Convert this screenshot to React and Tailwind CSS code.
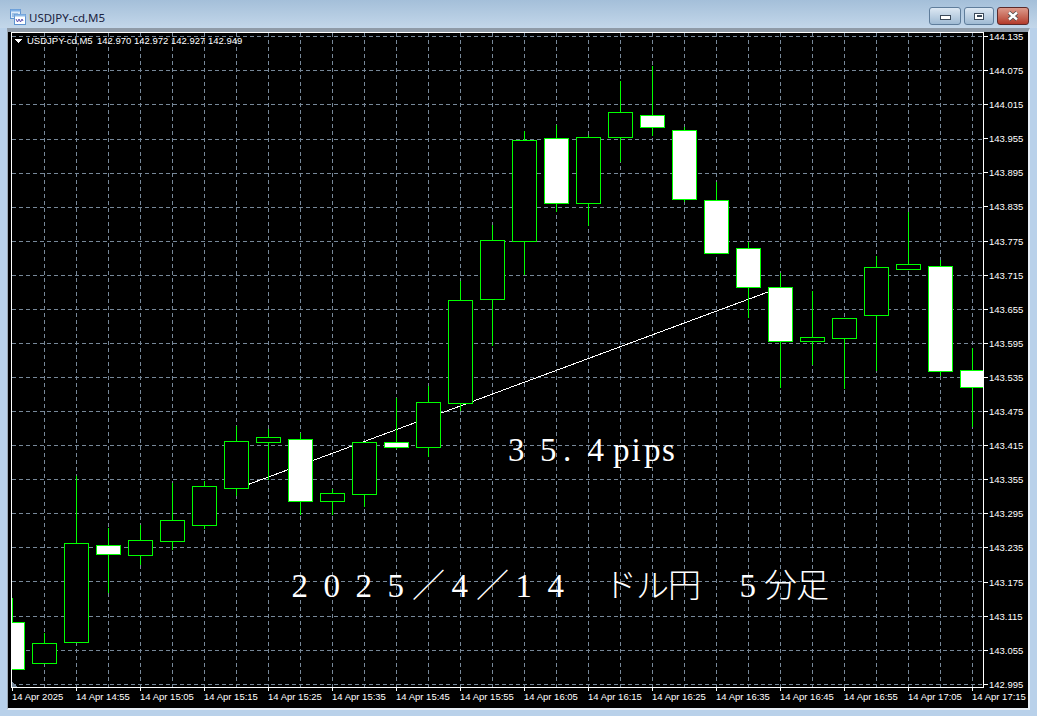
const GRID_Y = [36, 70, 104, 139, 173, 207, 241, 275, 309, 343, 377, 411, 445, 479, 513, 547, 581, 616, 650, 684];
const PRICES = ["144.135", "144.075", "144.015", "143.955", "143.895", "143.835", "143.775", "143.715", "143.655", "143.595", "143.535", "143.475", "143.415", "143.355", "143.295", "143.235", "143.175", "143.115", "143.055", "142.995"];
const TIMES = ["14 Apr 2025", "14 Apr 14:55", "14 Apr 15:05", "14 Apr 15:15", "14 Apr 15:25", "14 Apr 15:35", "14 Apr 15:45", "14 Apr 15:55", "14 Apr 16:05", "14 Apr 16:15", "14 Apr 16:25", "14 Apr 16:35", "14 Apr 16:45", "14 Apr 16:55", "14 Apr 17:05", "14 Apr 17:15"];

// high, low, body top, body bottom, filled
const CANDLES = [
  [598, 622, 622, 669, 1],
  [633, 643, 643, 663, 0],
  [476, 543, 543, 642, 0],
  [528, 593, 545, 554, 1],
  [525, 565, 540, 555, 0],
  [483, 550, 520, 541, 0],
  [481, 529, 486, 525, 0],
  [426, 496, 441, 488, 0],
  [429, 480, 437, 442, 0],
  [433, 515, 439, 501, 1],
  [489, 515, 493, 501, 0],
  [442, 507, 442, 494, 0],
  [398, 449, 442, 447, 1],
  [386, 457, 402, 447, 0],
  [281, 411, 300, 403, 0],
  [225, 346, 240, 299, 0],
  [131, 275, 140, 241, 0],
  [125, 212, 138, 203, 1],
  [135, 226, 137, 203, 0],
  [81, 162, 112, 137, 0],
  [66, 136, 115, 127, 1],
  [127, 202, 130, 199, 1],
  [182, 253, 200, 253, 1],
  [242, 318, 248, 287, 1],
  [273, 388, 287, 341, 1],
  [291, 365, 337, 341, 0],
  [318, 389, 318, 338, 0],
  [256, 371, 267, 315, 0],
  [212, 269, 264, 269, 0],
  [260, 376, 266, 371, 1],
  [348, 427, 370, 387, 1],
];

function AppIcon() {
  return (
    <svg width="17" height="17" viewBox="0 0 17 17" className="shrink-0">
      <rect x="0.5" y="0.5" width="10" height="9" fill="#dcebfa" stroke="#5f93cf" />
      <rect x="0.5" y="0.5" width="10" height="2" fill="#7fb0e6" />
      <path d="M2 5h6M2 7h4" stroke="#5f93cf" />
      <rect x="4.5" y="5.5" width="11" height="10" fill="#ffffff" stroke="#5f93cf" />
      <rect x="4.5" y="5.5" width="11" height="2" fill="#8fbbe9" />
      <path d="M6 10l1.5 3 1.5-3 1.5 3 1.5-3 1 2" fill="none" stroke="#5a4fb0" />
    </svg>
  );
}

function Chart() {
  return (
    <svg width="971" height="654" viewBox="12 33 971 654" shapeRendering="crispEdges" className="block">
      {GRID_Y.map((y) => (
        <line key={y} x1="12" x2="983" y1={y + 0.5} y2={y + 0.5} stroke="#778899" strokeDasharray="4 3" />
      ))}
      {CANDLES.slice(1).map((_, i) => (
        <line key={i} x1={44.5 + i * 32} x2={44.5 + i * 32} y1="33" y2="687" stroke="#778899" strokeDasharray="4 3" />
      ))}
      <line x1="236" y1="489" x2="768" y2="292" stroke="#ffffff" />
      {CANDLES.map(([high, low, top, bottom, filled], i) => {
        const cx = 12.5 + i * 32;
        return (
          <g key={i}>
            <line x1={cx} x2={cx} y1={high} y2={low} stroke="#00ff00" />
            <rect x={cx - 12} y={top + 0.5} width="24" height={bottom - top} fill={filled ? "#ffffff" : "#000000"} stroke="#00ff00" />
          </g>
        );
      })}
      <polygon points="12,682 17,687 12,687" fill="#778899" />
      <polygon points="15,39 22,39 18.5,43" fill="#ffffff" />
      <text x="27" y="44" fill="#ffffff" className="text-[9.5px] whitespace-pre [font-family:'Liberation_Sans',sans-serif]">USDJPY-cd,M5</text>
      <text x="97" y="44" fill="#ffffff" className="text-[9.5px] whitespace-pre [font-family:'Liberation_Sans',sans-serif]">142.970 142.972 142.927 142.949</text>
      {/* full width digits come out sans in the CJK font, so the serif digits are set on the same 32px cells */}
      <g fill="#ffffff" shapeRendering="auto" className="text-[33px] font-light [font-family:'Liberation_Serif','Noto_Sans_CJK_JP',serif]">
        <text y="461" x="508 540 563 587.5 613 631.5 644 662">35.4pips</text>
        <text y="597">
          <tspan x="291.5 323.5 355.5 387.5">2025</tspan>
          <tspan x="412">／</tspan>
          <tspan x="451.5">4</tspan>
          <tspan x="476">／</tspan>
          <tspan x="515.5 547.5">14</tspan>
          <tspan x="604 636 668">ドル円</tspan>
          <tspan x="739.5">5</tspan>
          <tspan x="764 796">分足</tspan>
        </text>
      </g>
    </svg>
  );
}

export default function App() {
  return (
    <div className="flex h-[716px] w-[1037px] flex-col overflow-hidden bg-[#b9d1ea]">
      {/* title bar */}
      <div className="flex h-[28px] shrink-0 items-start bg-gradient-to-b from-[#a4bfd9] to-[#c3d7ea] pl-[10px] pr-[8px]">
        <div className="mt-[9px] flex items-center gap-[2px]">
          <AppIcon />
          <span className="text-[11.5px] leading-[16px] text-[#1b2340] [font-family:'Noto_Sans',sans-serif]">USDJPY-cd,M5</span>
        </div>
        <div className="ml-auto mt-[7px] flex gap-[3px]">
          <button className="flex h-[18px] w-[32px] items-center justify-center rounded-[3px] border border-[#5f7d9b] bg-gradient-to-b from-[#dde8f3] to-[#9fbad3]">
            <span className="mt-[2px] h-[5px] w-[11px] border border-[#3c4a5a] bg-white" />
          </button>
          <button className="flex h-[18px] w-[30px] items-center justify-center rounded-[3px] border border-[#5f7d9b] bg-gradient-to-b from-[#dde8f3] to-[#9fbad3]">
            <span className="flex h-[7px] w-[10px] items-center justify-center border border-[#3c4a5a] bg-white">
              <span className="h-[2px] w-[5px] bg-[#3c4a5a]" />
            </span>
          </button>
          <button className="flex h-[18px] w-[32px] items-center justify-center rounded-[3px] border border-[#5c2a2a] bg-gradient-to-b from-[#dc9a8c] to-[#b33a2b]">
            <svg width="14" height="10" viewBox="0 0 14 10">
              <path d="M3 1.5l8 7M11 1.5l-8 7" stroke="#4a4a4a" strokeWidth="4" />
              <path d="M3 1.5l8 7M11 1.5l-8 7" stroke="#ffffff" strokeWidth="2.4" />
            </svg>
          </button>
        </div>
      </div>

      {/* chart window */}
      <div className="mx-[7px] mb-[6px] min-h-0 flex-1 border-b-2 border-l border-r-2 border-t-[4px] border-b-[#e8eff6] border-l-[#9aa6b2] border-r-[#e8eff6] border-t-[#8f9ba8] bg-black pl-[3px]">
        <div className="flex h-[656px]">
          <div className="border border-white">
            <Chart />
          </div>
          <div className="flex flex-col pt-[4px]">
            {PRICES.map((price) => (
              <div key={price} className="flex h-[34.1px] shrink-0 items-start">
                <span className="h-px w-[4px] bg-white" />
                <span className="ml-px -mt-[5px] text-[9.5px] leading-[11px] text-white [font-family:'Liberation_Sans',sans-serif]">{price}</span>
              </div>
            ))}
          </div>
        </div>
        <div className="flex pl-px">
          {TIMES.map((time) => (
            <div key={time} className="w-[64px] shrink-0">
              <div className="h-[3px] w-px bg-white" />
              <div className="whitespace-nowrap text-[9.5px] leading-[11px] text-white [font-family:'Liberation_Sans',sans-serif]">{time}</div>
            </div>
          ))}
        </div>
      </div>
    </div>
  );
}
